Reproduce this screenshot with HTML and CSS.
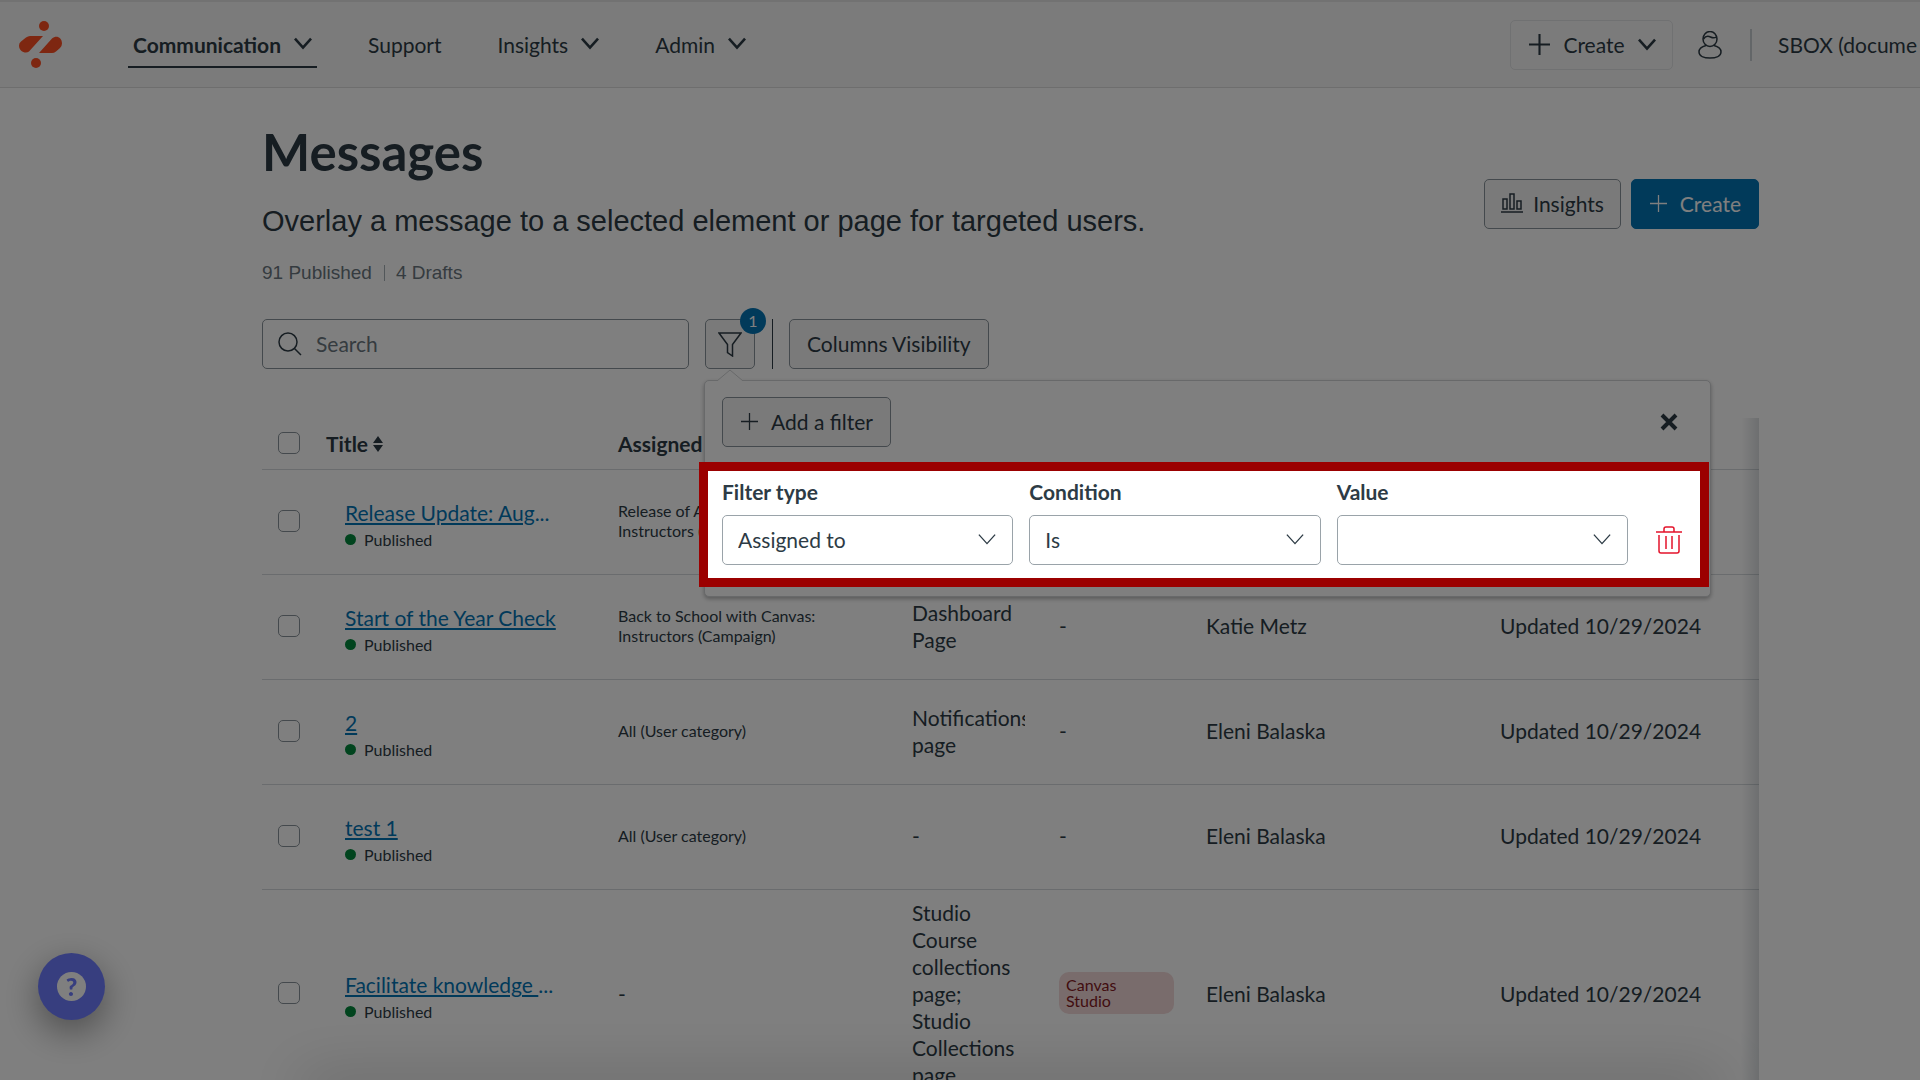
FILE: index.html
```html
<!DOCTYPE html>
<html lang="en">
<head>
<meta charset="utf-8">
<title>Messages</title>
<link rel="stylesheet" href="styles.css">
</head>
<body>
<svg class="defs" aria-hidden="true">
  <symbol id="chevron" viewBox="0 0 20 20"><path d="M1 4l9 10 9-10"/></symbol>
  <symbol id="plus" viewBox="0 0 20 20"><path d="M10 0v20M0 10h20"/></symbol>
</svg>

<header class="topbar">
  <a class="logo" href="#" aria-label="Home">
    <svg width="44" height="50" viewBox="0 0 44 50"><circle cx="25" cy="6" r="5"/><circle cx="17" cy="43" r="5"/><path d="M11 16h13L10 31.500C7 34 0 32 0 25.500Q0 23 2 21.500L7 17.500Q9 16 11 16zM33 33H20L33 18.500C37 15 43 17 43 23.500Q43 26 41 28L37 31.500Q35 33 33 33z"/></svg>
  </a>
  <nav class="nav">
    <a class="nav-item active" href="#">Communication <svg class="chev"><use href="#chevron"/></svg></a>
    <a class="nav-item" href="#">Support</a>
    <a class="nav-item" href="#">Insights <svg class="chev"><use href="#chevron"/></svg></a>
    <a class="nav-item" href="#">Admin <svg class="chev"><use href="#chevron"/></svg></a>
  </nav>
  <div class="account">
    <button class="top-create" type="button"><svg class="plus-lg"><use href="#plus"/></svg>Create <svg class="chev"><use href="#chevron"/></svg></button>
    <a class="user" href="#" aria-label="Profile"><svg width="24" height="28" viewBox="0 0 24 28"><ellipse cx="12" cy="8" rx="7" ry="7.500"/><path d="M5.500 8c2-3 4-3.500 7-2s4.500 1 6 0M8 14.500C4 15.500 1 17.500 1 21c0 4 5 6 11 6s11-2 11-6c0-3.500-3-5.500-7-6.500"/></svg></a>
    <span class="rule"></span>
    <span class="tenant">SBOX (docume</span>
  </div>
</header>

<main class="page">
  <div class="heading">
    <div>
      <h1>Messages</h1>
      <p class="lead">Overlay a message to a selected element or page for targeted users.</p>
      <p class="counts"><span>91 Published</span><span>4 Drafts</span></p>
    </div>
    <div class="actions">
      <button class="btn compact" type="button"><svg width="22" height="20" viewBox="0 0 22 20"><path d="M2 6h4v10H2zM9 1h4v15H9zM16 8h4v8h-4zM0 19h22"/></svg>Insights</button>
      <button class="btn roomy primary" type="button"><svg class="plus"><use href="#plus"/></svg>Create</button>
    </div>
  </div>

  <div class="toolbar">
    <label class="search">
      <svg width="24" height="24" viewBox="0 0 24 24"><circle cx="10" cy="10" r="9"/><path d="M16.500 16.500L23 23"/></svg>
      <input type="text" placeholder="Search" aria-label="Search">
    </label>
    <div class="filter">
      <button class="btn filter-btn" type="button" aria-label="Filters"><svg width="24" height="25" viewBox="0 0 24 25"><path d="M1 1h22l-8.500 11.500V24l-5-3.500v-8z"/></svg></button>
      <span class="badge">1</span>
      <div class="popover">
        <svg class="arrow" width="28" height="12" viewBox="0 0 28 12"><path d="M1 12L14 1l13 11"/></svg>
        <div class="popover-head">
          <button class="btn roomy" type="button"><svg class="plus"><use href="#plus"/></svg>Add a filter</button>
          <button class="icon-btn" type="button" aria-label="Close"><svg class="close" width="18" height="18" viewBox="0 0 18 18"><path d="M2 2l14 14M16 2L2 16"/></svg></button>
        </div>
        <div class="filter-row">
          <label class="field">Filter type
            <span class="select"><select><option>Assigned to</option></select><svg class="chev thin"><use href="#chevron"/></svg></span>
          </label>
          <label class="field">Condition
            <span class="select"><select><option>Is</option></select><svg class="chev thin"><use href="#chevron"/></svg></span>
          </label>
          <label class="field">Value
            <span class="select"><select><option></option></select><svg class="chev thin"><use href="#chevron"/></svg></span>
          </label>
          <button class="icon-btn trash" type="button" aria-label="Delete filter"><svg width="28" height="28" viewBox="0 0 28 28"><path d="M1 6h26M9 6V3q0-2 2-2h6q2 0 2 2v3M4 9v16q0 2 2 2h16q2 0 2-2V9M11 10v13M17 10v13"/></svg></button>
        </div>
        <div class="spotlight"></div>
      </div>
    </div>
    <span class="divider"></span>
    <button class="btn" type="button">Columns Visibility</button>
  </div>

  <div class="table-wrap">
    <table>
      <colgroup><col class="c-check"><col class="c-title"><col class="c-wide"><col class="c-narrow"><col class="c-narrow"><col class="c-wide"><col></colgroup>
      <thead>
        <tr>
          <th><input type="checkbox" aria-label="Select all"></th>
          <th>Title <svg class="sort" width="10" height="16" viewBox="0 0 10 16"><path d="M0 7l5-7 5 7zM0 9l5 7 5-7z"/></svg></th>
          <th>Assigned to</th><th>Page</th><th>Tags</th><th>Author</th><th>Status</th>
        </tr>
      </thead>
      <tbody>
        <tr>
          <td><input type="checkbox" aria-label="Select Release Update"></td>
          <td class="title"><a href="#"><span>Release Update: Aug</span>...</a><div class="status">Published</div></td>
          <td class="small">Release of August:<br>Instructors (Campaign)</td><td>-</td><td>-</td><td>Katie Metz</td><td>Updated 10/29/2024</td>
        </tr>
        <tr>
          <td><input type="checkbox" aria-label="Select Start of the Year Check"></td>
          <td class="title"><a href="#"><span>Start of the Year Check</span></a><div class="status">Published</div></td>
          <td class="small">Back to School with Canvas:<br>Instructors (Campaign)</td><td><div class="clip">Dashboard Page</div></td><td>-</td><td>Katie Metz</td><td>Updated 10/29/2024</td>
        </tr>
        <tr>
          <td><input type="checkbox" aria-label="Select 2"></td>
          <td class="title"><a href="#"><span>2</span></a><div class="status">Published</div></td>
          <td class="small">All (User category)</td><td><div class="clip">Notifications page</div></td><td>-</td><td>Eleni Balaska</td><td>Updated 10/29/2024</td>
        </tr>
        <tr>
          <td><input type="checkbox" aria-label="Select test 1"></td>
          <td class="title"><a href="#"><span>test 1</span></a><div class="status">Published</div></td>
          <td class="small">All (User category)</td><td>-</td><td>-</td><td>Eleni Balaska</td><td>Updated 10/29/2024</td>
        </tr>
        <tr>
          <td><input type="checkbox" aria-label="Select Facilitate knowledge"></td>
          <td class="title"><a href="#"><span>Facilitate knowledge </span>...</a><div class="status">Published</div></td>
          <td>-</td><td><div class="clip">Studio Course collections page; Studio Collections page</div></td><td><span class="pill">Canvas Studio</span></td><td>Eleni Balaska</td><td>Updated 10/29/2024</td>
        </tr>
      </tbody>
    </table>
  </div>
</main>

<button class="help" type="button" aria-label="Help"><span>?</span></button>
</body>
</html>
```
FILE: styles.css
```css
* { box-sizing: border-box; }
html, body { height: 100%; }
body {
  margin: 0;
  overflow: hidden;
  background: #fff;
  color: #2d3b45;
  font-family: Lato, "Liberation Sans", sans-serif;
  font-size: 21px;
  line-height: 27px;
}
/* soft shade along the bottom edge of the window */
body::after {
  content: "";
  position: fixed;
  left: 300px;
  right: 200px;
  bottom: -20px;
  height: 20px;
  box-shadow: 0 0 60px rgba(0, 0, 0, .3);
}
button, input, select { font: inherit; color: inherit; }
button { cursor: pointer; }
a { color: inherit; text-decoration: none; }
h1, p { margin: 0; }
svg { fill: none; stroke: currentColor; flex: none; }
.defs { position: absolute; width: 0; height: 0; }

.topbar {
  display: flex;
  align-items: center;
  height: 88px;
  padding-left: 19px;
  background: #f7f7f7;
  border-top: 2px solid #e4e4e4;
  border-bottom: 1px solid #dcdcdc;
  white-space: nowrap;
}
.logo { display: flex; margin-right: 65px; }
.logo svg { fill: #fc4f23; stroke: none; }
.nav { display: flex; gap: 46px; }
.nav-item {
  display: flex;
  align-items: center;
  gap: 13px;
  padding: 9px 5px 8px;
  border-bottom: 2px solid transparent;
}
.nav-item.active { border-color: #2d3b45; font-weight: 700; }
.chev { width: 18px; height: 18px; stroke-width: 3; }
.chev.thin { stroke-width: 1.5; }
.plus { width: 17px; height: 17px; stroke-width: 2; }
.plus-lg { width: 21px; height: 21px; stroke-width: 2; }
.account { display: flex; align-items: center; margin-left: auto; }
.top-create {
  display: flex;
  align-items: center;
  justify-content: space-between;
  width: 163px;
  height: 50px;
  padding: 0 16px 0 18px;
  background: #f7f7f7;
  border: 1px solid #e0e2e4;
  border-radius: 5px;
}
.user { display: flex; margin: 0 28px 0 25px; }
.user svg { stroke-width: 1.5; }
.rule { width: 2px; height: 32px; background: #c7cdd1; }
.tenant { width: 142px; margin-left: 26px; }

.page { margin: 0 161px 0 262px; }
.heading { display: flex; justify-content: space-between; padding-top: 31px; }
h1 { font-size: 51px; line-height: 66px; font-weight: 700; }
.lead { margin-top: 19px; font: 29px/34px "Liberation Sans", sans-serif; }
.counts {
  display: flex;
  align-items: center;
  margin-top: 24px;
  color: #6b7780;
  font: 19px/22px "Liberation Sans", sans-serif;
}
.counts span + span { margin-left: 12px; padding-left: 12px; background: linear-gradient(#a5afb5, #a5afb5) 0 50% / 1px 16px no-repeat; }
.actions { display: flex; gap: 10px; padding-top: 60px; }
.btn {
  display: flex;
  align-items: center;
  gap: 12px;
  height: 50px;
  padding: 0 17px 2px;
  background: #f5f5f5;
  border: 1px solid #89939a;
  border-radius: 5px;
  white-space: nowrap;
}
.btn svg { stroke-width: 1.5; }
.btn.compact { gap: 10px; padding: 0 16px 2px; }
.btn.roomy { gap: 13px; padding: 0 17px 2px 18px; }
.btn.primary { background: #0374b5; border-color: #0374b5; color: #fff; }

.toolbar { display: flex; align-items: center; height: 50px; margin-top: 35px; }
.search {
  display: flex;
  align-items: center;
  gap: 14px;
  width: 427px;
  height: 50px;
  padding: 0 15px;
  border: 1px solid #89939a;
  border-radius: 5px;
}
.search svg { stroke-width: 1.5; }
.search input { flex: 1; min-width: 0; padding: 0 0 2px; border: 0; outline: 0; background: none; }
.search input::placeholder { color: #6b7780; opacity: 1; }
.filter { position: relative; z-index: 10; margin-left: 16px; }
.filter-btn { width: 50px; padding: 0; justify-content: center; }
.badge {
  position: absolute;
  top: -11px;
  right: -11px;
  width: 26px;
  height: 26px;
  border-radius: 13px;
  background: #0374b5;
  color: #fff;
  font-size: 16px;
  line-height: 26px;
  text-align: center;
}
.divider { width: 1px; height: 50px; margin: 0 16px 0 17px; background: #2d3b45; }

.popover {
  position: absolute;
  top: 61px;
  left: -1px;
  width: 1007px;
  padding: 16px 16px 31px 17px;
  background: #fff;
  border: 1px solid #d0d2d4;
  border-radius: 5px;
  box-shadow: 0 2px 4px rgba(0, 0, 0, .3);
}
.arrow { position: absolute; top: -12px; left: 11px; fill: #fff; stroke: #d0d2d4; }
.popover-head { display: flex; align-items: center; justify-content: space-between; }
.icon-btn { display: flex; justify-content: center; width: 50px; padding: 0; background: none; border: 0; }
.close { stroke-width: 4; }
.filter-row { display: flex; align-items: flex-end; gap: 16px; margin-top: 31px; }
.field { display: grid; gap: 10px; flex: 1; font-weight: 700; }
.select { position: relative; display: flex; align-items: center; font-weight: 400; }
.select select {
  width: 100%;
  height: 50px;
  padding: 0 15px 2px;
  appearance: none;
  background: #fff;
  border: 1px solid #9aa3a9;
  border-radius: 5px;
}
.select svg { position: absolute; right: 17px; pointer-events: none; }
.trash { height: 50px; align-items: center; color: #e4132b; }
.trash svg { stroke-width: 1.5; }
.spotlight {
  position: absolute;
  top: 81px;
  left: -6px;
  right: 1px;
  height: 125px;
  border: 9px solid #9b0000;
  box-shadow: 0 0 0 4000px rgba(0, 0, 0, .5);
  pointer-events: none;
}

.table-wrap { position: relative; margin-top: 49px; }
.table-wrap::after {
  content: "";
  position: absolute;
  inset: 0 0 0 auto;
  width: 18px;
  background: linear-gradient(90deg, rgba(57, 75, 88, 0), rgba(57, 75, 88, .18));
}
table { width: 100%; table-layout: fixed; border-collapse: collapse; }
.c-check { width: 64px; }
.c-title { width: 292px; }
.c-wide { width: 294px; }
.c-narrow { width: 147px; }
th { height: 51px; padding: 0; text-align: left; font-weight: 700; border-bottom: 1px solid #d5d9dc; }
td { height: 105px; padding: 9px 0 11px; border-bottom: 1px solid #d5d9dc; }
td.title { padding: 15px 0 7px 19px; }
.sort { fill: currentColor; stroke: none; }
input[type="checkbox"] {
  display: block;
  appearance: none;
  width: 22px;
  height: 22px;
  margin: 0 0 0 16px;
  background: #fff;
  border: 1px solid #89939a;
  border-radius: 5px;
}
.title a { color: #0374b5; }
.title a span { text-decoration: underline; white-space: pre; }
.status { display: flex; align-items: center; gap: 8px; font-size: 16px; }
.status::before { content: ""; width: 11px; height: 11px; border-radius: 50%; background: #03893d; }
.small { font-size: 16px; line-height: 20px; }
.clip { width: 113px; overflow: hidden; }
.pill {
  display: block;
  width: 115px;
  padding: 5px 50px 5px 7px;
  border-radius: 10px;
  background: #f2d8d8;
  color: #84181f;
  font-size: 16px;
  line-height: 16px;
}

.help {
  position: fixed;
  left: 38px;
  bottom: 60px;
  width: 67px;
  height: 67px;
  padding: 19px;
  border: 0;
  border-radius: 50%;
  background: #6f7dff;
  box-shadow: 0 12px 36px rgba(0, 0, 0, .4);
}
.help span {
  display: block;
  width: 29px;
  height: 29px;
  border-radius: 50%;
  background: #fff;
  color: #6f7dff;
  font-weight: 900;
  font-size: 25px;
  line-height: 29px;
}
```
